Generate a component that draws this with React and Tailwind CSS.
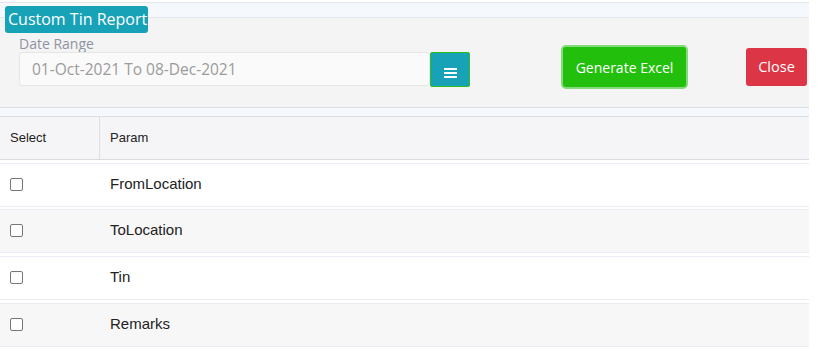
const params = ['FromLocation', 'ToLocation', 'Tin', 'Remarks'];

const MenuIcon = () => (
  <svg width="13" height="10" viewBox="0 0 13 10" className="mt-[7px]">
    <rect x="0" y="0" width="13" height="2" fill="#fff" />
    <rect x="0" y="4" width="13" height="2" fill="#fff" />
    <rect x="0" y="8" width="13" height="2" fill="#fff" />
  </svg>
);

export default function App() {
  return (
    <div className="w-[819px] h-[351px] bg-white overflow-hidden">
      <div className="relative w-[809px]">
        {/* Title badge */}
        <div
          className="absolute left-[5px] top-[4px] h-[27px] w-[143px] bg-[#17a2b8] rounded-[3px] text-white text-[16px] font-medium leading-[27px] pl-[3px] whitespace-nowrap"
          style={{ fontFamily: '"Open Sans", "Liberation Sans", sans-serif' }}
        >
          Custom Tin Report
        </div>

        <div className="mt-[2px] h-[16px] border-y border-[#e2e5ea] bg-[#f5f8fc]" />

        {/* Filter panel */}
        <div
          className="h-[90px] bg-[#f4f4f4] border-b border-[#dcdfe4] flex items-start"
          style={{ fontFamily: '"Open Sans", "Liberation Sans", sans-serif' }}
        >
          <div className="ml-[19px] mt-[17px]">
            <div className="text-[14px] leading-[17px] text-[#8e92a2]">Date Range</div>
            <div className="flex">
              <div className="w-[411px] h-[34px] bg-[#fafafa] border border-[#e6e6e6] rounded-[3px] pl-[12px] text-[15.5px] leading-[32px] text-[#9b9b9b]">
                01-Oct-2021 To 08-Dec-2021
              </div>
              <button className="w-[40px] h-[35px] bg-[#17a2b8] border border-[#2fbf1c] rounded-[2px] flex justify-center items-start pt-[8px]">
                <MenuIcon />
              </button>
            </div>
          </div>
          <button className="ml-[91px] mt-[27px] w-[127px] h-[44px] bg-[#22bf0c] border-2 border-[#86da7e] rounded-[5px] text-white text-[14px]">
            Generate Excel
          </button>
          <button className="ml-[58px] mt-[30px] w-[61px] h-[38px] bg-[#dc3545] rounded-[3px] text-white text-[14.5px]">
            Close
          </button>
        </div>

        <div className="h-[9px] bg-[#f5f8fc] border-b border-[#dcdfe4]" />

        {/* Table */}
        <div style={{ fontFamily: '"Liberation Sans", Arial, sans-serif' }} className="text-[#222]">
          <div className="h-[43px] bg-[#f5f5f7] border-b border-[#d9d9de] flex text-[13px]">
            <div className="w-[100px] border-r border-[#dedee3] pl-[10px] flex items-center pb-[1px]">Select</div>
            <div className="pl-[10px] flex items-center pb-[1px]">Param</div>
          </div>
          {params.map((p, i) => (
            <div
              key={p}
              className={`h-[44px] border-y border-[#ebebf6] flex items-center text-[15px] pb-[2px] ${
                i === 1 ? 'mt-[2px]' : 'mt-[3px]'
              } ${i % 2 === 0 ? 'bg-white' : 'bg-[#f7f7f7]'}`}
            >
              <div className="w-[100px] pl-[10px] flex items-center">
                <input
                  type="checkbox"
                  className="appearance-none w-[13px] h-[13px] border border-[#767676] rounded-[2px] bg-white m-0"
                />
              </div>
              <div className="pl-[10px]">{p}</div>
            </div>
          ))}
        </div>
      </div>
    </div>
  );
}
